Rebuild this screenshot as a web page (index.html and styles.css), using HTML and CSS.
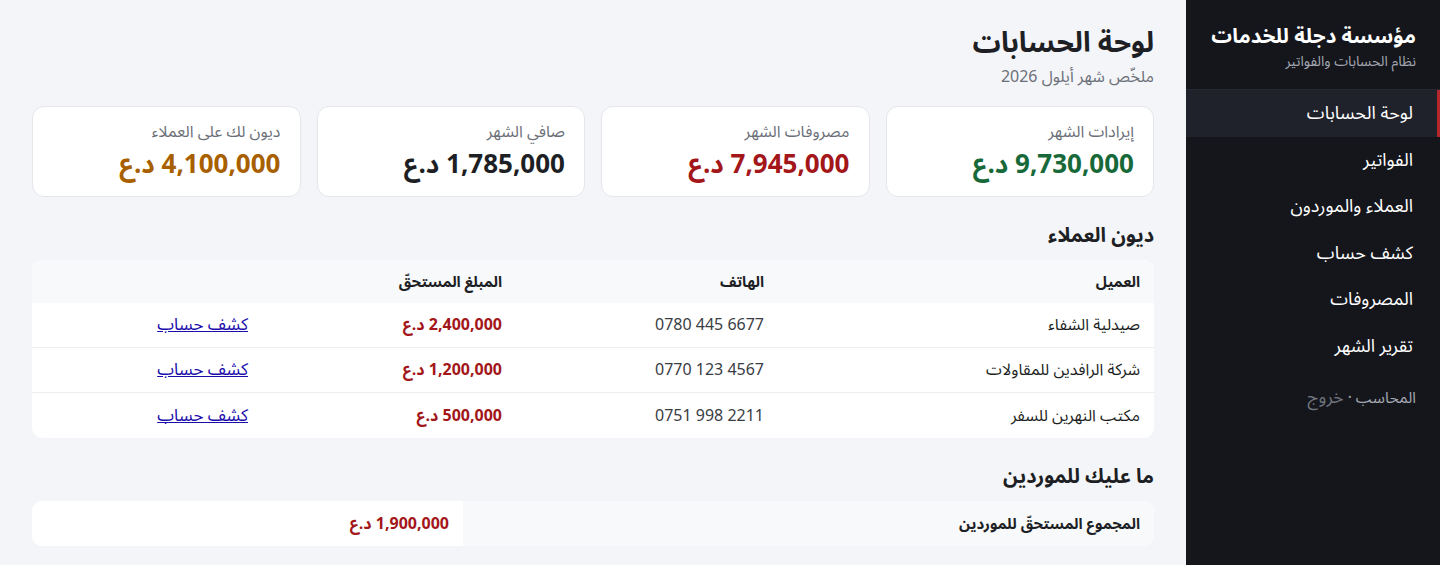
FILE: index.html
```html
<!DOCTYPE html>
<html lang="ar" dir="rtl">
<head>
    <meta charset="UTF-8">
    <meta name="viewport" content="width=device-width, initial-scale=1.0">
    <title>لوحة الحسابات</title>
    <link rel="stylesheet" href="styles.css">
</head>
<body>
    <div class="layout">
        <aside class="sidebar">
            <div class="brand">
                <h1>مؤسسة دجلة للخدمات</h1>
                <p>نظام الحسابات والفواتير</p>
            </div>
            <nav class="nav">
                <a href="#" class="active">لوحة الحسابات</a>
                <a href="#">الفواتير</a>
                <a href="#">العملاء والموردون</a>
                <a href="#">كشف حساب</a>
                <a href="#">المصروفات</a>
                <a href="#">تقرير الشهر</a>
            </nav>
            <div class="user">المحاسب · <a href="#">خروج</a></div>
        </aside>

        <main class="main">
            <header class="page-head">
                <h2>لوحة الحسابات</h2>
                <p>ملخّص شهر أيلول 2026</p>
            </header>

            <div class="cards">
                <div class="card">
                    <div class="label">إيرادات الشهر</div>
                    <div class="value green">9,730,000 د.ع</div>
                </div>
                <div class="card">
                    <div class="label">مصروفات الشهر</div>
                    <div class="value red">7,945,000 د.ع</div>
                </div>
                <div class="card">
                    <div class="label">صافي الشهر</div>
                    <div class="value">1,785,000 د.ع</div>
                </div>
                <div class="card">
                    <div class="label">ديون لك على العملاء</div>
                    <div class="value brown">4,100,000 د.ع</div>
                </div>
            </div>

            <h3 class="section-title">ديون العملاء</h3>
            <table class="table debts">
                <thead>
                    <tr>
                        <th class="col-name">العميل</th>
                        <th class="col-phone">الهاتف</th>
                        <th class="col-amount">المبلغ المستحقّ</th>
                        <th></th>
                    </tr>
                </thead>
                <tbody>
                    <tr>
                        <td>صيدلية الشفاء</td>
                        <td class="phone"><span dir="ltr">0780 445 6677</span></td>
                        <td class="amount">2,400,000 د.ع</td>
                        <td><a href="#">كشف حساب</a></td>
                    </tr>
                    <tr>
                        <td>شركة الرافدين للمقاولات</td>
                        <td class="phone"><span dir="ltr">0770 123 4567</span></td>
                        <td class="amount">1,200,000 د.ع</td>
                        <td><a href="#">كشف حساب</a></td>
                    </tr>
                    <tr>
                        <td>مكتب النهرين للسفر</td>
                        <td class="phone"><span dir="ltr">0751 998 2211</span></td>
                        <td class="amount">500,000 د.ع</td>
                        <td><a href="#">كشف حساب</a></td>
                    </tr>
                </tbody>
            </table>

            <h3 class="section-title">ما عليك للموردين</h3>
            <table class="table suppliers">
                <tr>
                    <th class="row-head">المجموع المستحقّ للموردين</th>
                    <td class="amount">1,900,000 د.ع</td>
                </tr>
            </table>
        </main>
    </div>
</body>
</html>
```

FILE: styles.css
```css
* {
    box-sizing: border-box;
}

body {
    margin: 0;
    font-family: "Noto Sans Arabic", "Noto Sans", "DejaVu Sans", sans-serif;
    background-color: #f4f5f8;
    color: #1d1f24;
}

.layout {
    display: flex;
    min-height: 565px;
}

/* sidebar */

.sidebar {
    width: 254px;
    flex-shrink: 0;
    background-color: #14161c;
    color: #fff;
}

.brand {
    padding: 21px 24px 18px 10px;
    border-bottom: 1px solid #262932;
    white-space: nowrap;
}

.brand h1 {
    margin: 0;
    font-size: 20.5px;
    font-weight: 700;
    line-height: 32px;
}

.brand p {
    margin: 0;
    font-size: 14px;
    color: #a3a7b0;
    line-height: 18px;
}

.nav {
    display: flex;
    flex-direction: column;
}

.nav a {
    display: block;
    padding: 0 24px;
    height: 46.5px;
    line-height: 46px;
    color: #fff;
    text-decoration: none;
    font-size: 18px;
    border-right: 3px solid transparent;
}

.nav a.active {
    background-color: #1f222a;
    border-right-color: #b3262a;
}

.user {
    padding: 17px 24px;
    font-size: 15.5px;
    line-height: 24px;
    color: #a3a7b0;
}

.user a {
    color: #6f747d;
    text-decoration: none;
    font-size: 17.5px;
}

/* main */

.main {
    flex: 1;
    padding: 23px 32px 20px;
}

.page-head h2 {
    margin: 0;
    font-size: 28px;
    font-weight: 700;
    line-height: 42px;
}

.page-head p {
    margin: 2px 0 0;
    font-size: 16px;
    color: #6b6f78;
    line-height: 20px;
}

.cards {
    display: grid;
    grid-template-columns: repeat(4, 1fr);
    gap: 16px;
    margin-top: 19px;
}

.card {
    background-color: #fff;
    border: 1px solid #e4e6ea;
    border-radius: 12px;
    height: 91px;
    padding: 13px 19px;
}

.card .label {
    font-size: 16px;
    color: #6b6f78;
    line-height: 24px;
}

.card .value {
    margin-top: 4px;
    font-size: 26px;
    font-weight: 700;
    line-height: 34px;
    color: #1d1f24;
}

.value.green {
    color: #17693a;
}

.value.red {
    color: #a3161a;
}

.value.brown {
    color: #a85f00;
}

.section-title {
    margin: 25px 0 10px;
    font-size: 20px;
    font-weight: 700;
    line-height: 28px;
}

.table {
    width: 100%;
    border-collapse: separate;
    border-spacing: 0;
    background-color: #fff;
    border-radius: 10px;
    overflow: hidden;
    font-size: 16px;
}

.table th,
.table td {
    text-align: right;
    padding: 0 14px;
    height: 45px;
    border-bottom: 1px solid #eceef1;
}

.table th {
    font-weight: 700;
    background-color: #f8f9fb;
    font-size: 15px;
}

.table tr:last-child td,
.table tr:last-child th {
    border-bottom: none;
}

.debts thead th {
    height: 43px;
}

.col-name {
    width: 376px;
}

.col-phone {
    width: 262px;
}

.col-amount {
    width: 254px;
}

.phone {
    color: #3a3d44;
}

.amount {
    color: #a3161a;
    font-weight: 700;
}

.table a {
    color: #1a0dab;
    text-decoration: underline;
    font-size: 17px;
}

.suppliers .row-head {
    width: 691px;
}

.suppliers .amount {
    background-color: #fff;
}
```
